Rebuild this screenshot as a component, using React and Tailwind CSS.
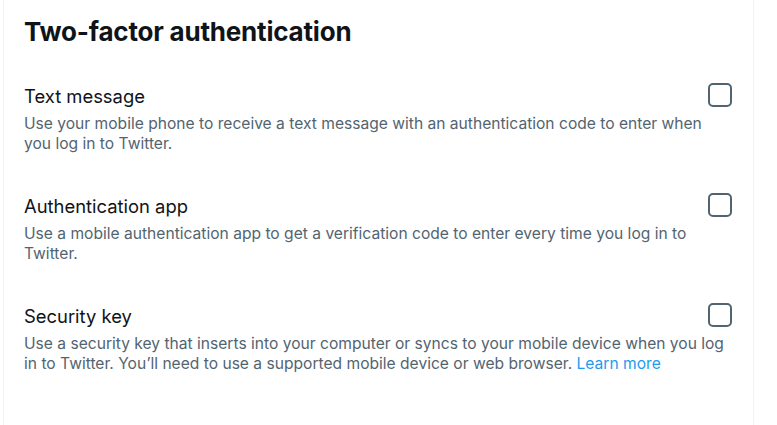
export default function App() {
  const font = { fontFamily: 'Inter, "Noto Sans", sans-serif' };
  const items = [
    {
      title: "Text message",
      desc: "Use your mobile phone to receive a text message with an authentication code to enter when you log in to Twitter.",
    },
    {
      title: "Authentication app",
      desc: "Use a mobile authentication app to get a verification code to enter every time you log in to Twitter.",
    },
    {
      title: "Security key",
      desc: "Use a security key that inserts into your computer or syncs to your mobile device when you log in to Twitter. You\u2019ll need to use a supported mobile device or web browser.",
      link: true,
    },
  ];
  return (
    <div className="w-[777px] h-[425px] bg-white overflow-hidden" style={font}>
      <div className="ml-[3px] w-[751px] h-[425px] border-x border-[#eff3f4]">
        <div className="px-[20px] pt-[17px] pb-[37px]">
          <h2 className="text-[26px] leading-[30px] font-bold text-[#0f1419] tracking-[-0.2px]">
            Two-factor authentication
          </h2>
        </div>
        {items.map((it) => (
          <div key={it.title} className="pl-[20px] pr-[21px] pb-[40px]">
            <div className="flex items-start justify-between">
              <div className="text-[18.4px] leading-[24px] text-[#0f1419]">{it.title}</div>
              <div className="-mt-[1px] w-[24px] h-[24px] rounded-[5px] border-2 border-[#536471]" />
            </div>
            <div className="mt-[6px] text-[15.6px] leading-[20px] text-[#536471]">
              {it.desc}
              {it.link && <span className="text-[#1d9bf0]"> Learn more</span>}
            </div>
          </div>
        ))}
      </div>
    </div>
  );
}
